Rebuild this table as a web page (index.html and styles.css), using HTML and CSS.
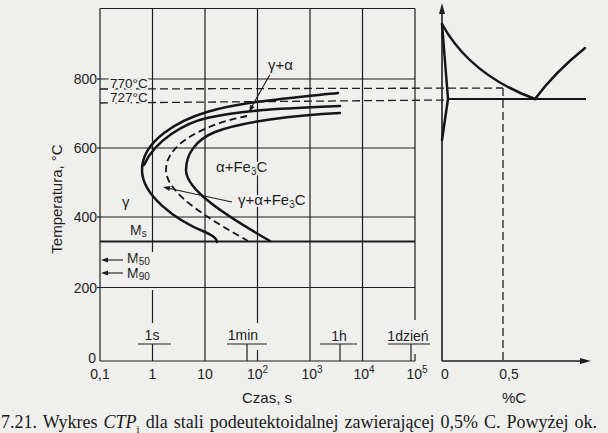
FILE: index.html
```html
<!DOCTYPE html>
<html lang="pl">
<head>
<meta charset="utf-8">
<title>Wykres CTP</title>
<link rel="stylesheet" href="styles.css">
</head>
<body>
<figure class="figure">
<svg class="chart" width="608" height="412" viewBox="0 0 608 412" xmlns="http://www.w3.org/2000/svg">
  <!-- grid: horizontal -->
  <g class="grid">
    <line x1="100" y1="8.5" x2="415" y2="8.5"/>
    <line x1="100" y1="79" x2="415" y2="79"/>
    <line x1="100" y1="148" x2="415" y2="148"/>
    <line x1="100" y1="217" x2="415" y2="217"/>
    <line x1="100" y1="287.5" x2="415" y2="287.5"/>
    <line x1="100" y1="361" x2="415" y2="361"/>
    <!-- vertical -->
    <line x1="100" y1="8.5" x2="100" y2="361"/>
    <line x1="152.5" y1="8.5" x2="152.5" y2="252"/>
    <line x1="152.5" y1="290" x2="152.5" y2="323"/>
    <line x1="205" y1="8.5" x2="205" y2="361"/>
    <line x1="257.5" y1="8.5" x2="257.5" y2="323"/>
    <line x1="257.5" y1="350" x2="257.5" y2="361"/>
    <line x1="310" y1="8.5" x2="310" y2="361"/>
    <line x1="362.5" y1="8.5" x2="362.5" y2="361"/>
    <line x1="415" y1="8.5" x2="415" y2="320"/>
    <line x1="415" y1="354" x2="415" y2="361"/>
    <!-- y ticks -->
    <line x1="97" y1="79" x2="100" y2="79"/>
    <line x1="97" y1="148" x2="100" y2="148"/>
    <line x1="97" y1="217" x2="100" y2="217"/>
    <line x1="97" y1="287.5" x2="100" y2="287.5"/>
    <!-- time bars -->
    <line x1="138" y1="344" x2="171" y2="344"/>
    <line x1="152.5" y1="344" x2="152.5" y2="361"/>
    <line x1="227" y1="344" x2="267" y2="344"/>
    <line x1="247" y1="344" x2="247" y2="361"/>
    <line x1="320" y1="344" x2="357" y2="344"/>
    <line x1="340" y1="344" x2="340" y2="361"/>
    <line x1="388" y1="344" x2="430" y2="344"/>
    <line x1="411" y1="344" x2="411" y2="361"/>
  </g>
  <line class="ms" x1="100" y1="241.5" x2="415" y2="241.5"/>

  <!-- dashed temperature lines -->
  <g class="dash">
    <line x1="100" y1="89" x2="503" y2="88"/>
    <line x1="100" y1="103" x2="447" y2="100"/>
    <line x1="503" y1="88" x2="503" y2="361"/>
  </g>

  <!-- transformation curves -->
  <g class="curve">
    <path d="M338,93 C290,98 240,102 207,112 C180,120 142,140 142,170 C142,195 175,220 205,232 C212,235 217,238 217,242"/>
    <path d="M340,106 C290,108 240,110 207,118 C185,123 155,140 144,165"/>
    <path d="M340,113 C295,115 240,122 215,132 C195,140 186,155 186,170 C186,190 225,215 270,241"/>
  </g>
  <path class="curve dashed" d="M247,116 C215,122 166,140 166,170 C166,195 215,222 248,241"/>

  <!-- arrows -->
  <g class="thin">
    <line x1="272" y1="71" x2="251" y2="108"/>
    <line x1="232" y1="202" x2="167" y2="188"/>
    <line x1="106" y1="260" x2="123" y2="260"/>
    <line x1="106" y1="273" x2="123" y2="273"/>
  </g>
  <g class="head">
    <polygon points="249,112 254.6,107.1 250.2,104.7"/>
    <polygon points="163,187 170.4,186.1 169.3,190.9"/>
    <polygon points="101,260 108,257.4 108,262.6"/>
    <polygon points="101,273 108,270.4 108,275.6"/>
  </g>

  <!-- right diagram -->
  <g class="axis">
    <line x1="442" y1="12" x2="442" y2="361"/>
    <line x1="442" y1="361" x2="582" y2="361"/>
  </g>
  <g class="head">
    <polygon points="442,3 439,14 445,14"/>
    <polygon points="591,361 580,358 580,364"/>
  </g>
  <g class="curve">
    <polyline points="442,24 448,99 442,140"/>
    <path d="M442,24 Q470,75 535,99"/>
    <path d="M535,99 Q555,72 585,48"/>
  </g>
  <line class="eut" x1="447" y1="99" x2="586" y2="99"/>

  <!-- labels -->
  <g class="lbl">
    <text x="97" y="84" text-anchor="end">800</text>
    <text x="97" y="153" text-anchor="end">600</text>
    <text x="97" y="222" text-anchor="end">400</text>
    <text x="97" y="292.5" text-anchor="end">200</text>
    <text x="96" y="363" text-anchor="end">0</text>

    <text x="100" y="379" text-anchor="middle">0,1</text>
    <text x="152.5" y="379" text-anchor="middle">1</text>
    <text x="205" y="379" text-anchor="middle">10</text>
    <text x="257.5" y="379" text-anchor="middle">10<tspan class="sup" dy="-6">2</tspan></text>
    <text x="312" y="379" text-anchor="middle">10<tspan class="sup" dy="-6">3</tspan></text>
    <text x="364" y="379" text-anchor="middle">10<tspan class="sup" dy="-6">4</tspan></text>
    <text x="417" y="379" text-anchor="middle">10<tspan class="sup" dy="-6">5</tspan></text>
    <text x="445" y="379" text-anchor="middle">0</text>
    <text x="509" y="379" text-anchor="middle">0,5</text>

    <text class="big" x="267" y="403" text-anchor="middle">Czas, s</text>
    <text class="big" x="514" y="403" text-anchor="middle">%C</text>
    <text class="big" transform="translate(62 199) rotate(-90)" text-anchor="middle">Temperatura, °C</text>

    <text class="halo" x="152" y="340" text-anchor="middle">1s</text>
    <text class="halo" x="243" y="340" text-anchor="middle">1min</text>
    <text class="halo" x="339" y="341" text-anchor="middle">1h</text>
    <text class="halo" x="408" y="341" text-anchor="middle">1dzień</text>

    <text class="halo small" x="110" y="87.5">770°C</text>
    <text class="halo small" x="110" y="102">727°C</text>

    <text class="halo big" x="268" y="70">γ+α</text>
    <text class="halo big" x="216" y="172">α+Fe<tspan class="sub" dy="3">3</tspan><tspan dy="-3">C</tspan></text>
    <text class="halo big" x="238" y="205">γ+α+Fe<tspan class="sub" dy="3">3</tspan><tspan dy="-3">C</tspan></text>
    <text class="big" x="122" y="207">γ</text>
    <text class="halo" x="130" y="235">M<tspan class="sub" dy="2">s</tspan></text>
    <text class="halo" x="127" y="263">M<tspan class="sub" dy="2">50</tspan></text>
    <text class="halo" x="127" y="278">M<tspan class="sub" dy="2">90</tspan></text>
  </g>
</svg>
<figcaption class="caption">7.21. Wykres <i>CTP</i><sub class="csub">i</sub> dla stali podeutektoidalnej zawierającej 0,5% C. Powyżej ok.</figcaption>
</figure>
</body>
</html>
```
FILE: styles.css
```css
html, body {
  margin: 0;
  padding: 0;
  background: #efefed;
}
body {
  width: 608px;
  height: 433px;
  overflow: hidden;
}
.figure {
  margin: 0;
  width: 608px;
}
.chart {
  display: block;
}
.grid line {
  stroke: #1e1e1e;
  stroke-width: 1.2;
  fill: none;
}
.ms {
  stroke: #1e1e1e;
  stroke-width: 2;
}
.dash line {
  stroke: #1e1e1e;
  stroke-width: 1.3;
  stroke-dasharray: 8 4;
}
.curve path,
.curve polyline,
path.curve {
  stroke: #151515;
  stroke-width: 2.5;
  fill: none;
  stroke-linecap: round;
  stroke-linejoin: round;
}
path.dashed {
  stroke-width: 1.8;
  stroke-dasharray: 7 4;
  stroke-linecap: butt;
}
.thin line {
  stroke: #1e1e1e;
  stroke-width: 1.1;
}
.head polygon {
  fill: #1e1e1e;
}
.axis line {
  stroke: #1e1e1e;
  stroke-width: 1.6;
}
.eut {
  stroke: #151515;
  stroke-width: 2.2;
}
.lbl text {
  font-family: "Liberation Sans", Arial, sans-serif;
  font-size: 14px;
  fill: #1e1e1e;
}
.lbl text.big {
  font-size: 15px;
}
.lbl text.small {
  font-size: 13.5px;
}
.sup,
.sub {
  font-size: 10px;
}
.halo {
  stroke: #efefed;
  stroke-width: 4px;
  stroke-linejoin: round;
  paint-order: stroke;
}
.caption {
  margin: 0;
  padding-left: 1px;
  font-family: "Liberation Serif", "Times New Roman", serif;
  font-size: 18px;
  line-height: 21px;
  color: #1a1a1a;
  white-space: nowrap;
  word-spacing: 1.5px;
}
.csub {
  font-size: 11px;
  line-height: 0;
}
```
